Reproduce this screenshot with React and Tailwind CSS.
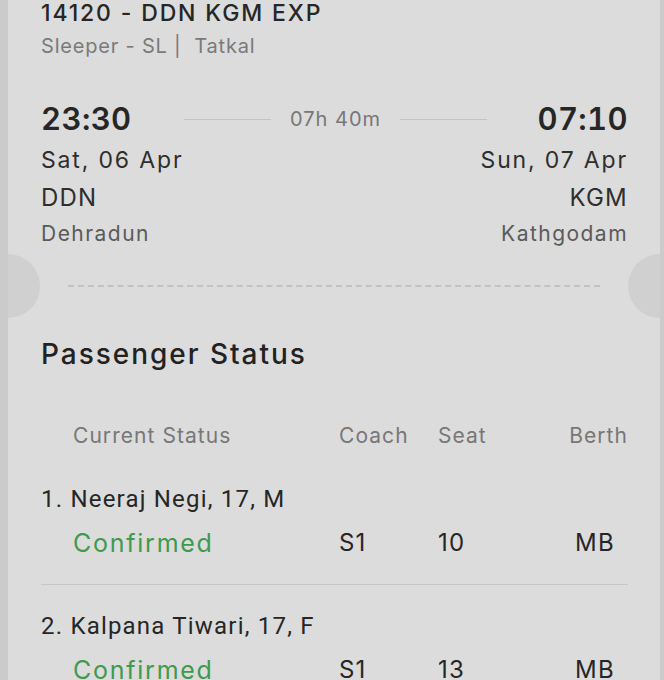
import React from "react";

const font = { fontFamily: 'Inter, "Open Sans", "Liberation Sans", sans-serif' };
const roboto = { fontFamily: 'Roboto, "Liberation Sans", sans-serif' };

function Passenger({ n, name, coach, seat, berth }) {
  return (
    <div className="flex flex-col gap-[12px]">
      <div className="h-[32px] leading-[32px] text-[24px] text-[#262626] tracking-[1.2px]" style={roboto}>
        {n}. {name}
      </div>
      <div className="grid grid-cols-[266px_99px_1fr_60px] pl-[32px] h-[32px] leading-[32px] text-[24px] tracking-[0.05em]">
        <span className="text-[#3f9a4c] text-[25px] tracking-[0.07em]">Confirmed</span>
        <span className="text-[#262626]">{coach}</span>
        <span className="text-[#262626]">{seat}</span>
        <span className="text-[#262626] text-center pr-[6px]">{berth}</span>
      </div>
    </div>
  );
}

export default function App() {
  return (
    <div className="w-[664px] h-[680px] overflow-hidden bg-[#cbcbcb] flex pl-[8px] pr-[4px]" style={font}>
      <div className="relative flex-1 bg-[#dcdcdc] overflow-hidden">
        <div className="absolute left-[-32px] top-[254px] w-[64px] h-[64px] rounded-full bg-[#d0d0d0]" />
        <div className="absolute right-[-32px] top-[254px] w-[64px] h-[64px] rounded-full bg-[#d0d0d0]" />
        <div className="flex flex-col pl-[33px] pr-[32px]">
          <div className="mt-[-2px] h-[30px] leading-[30px] text-[23px] font-medium text-[#262626] tracking-[0.08em]">
            14120 - DDN KGM EXP
          </div>
          <div className="mt-[3px] h-[30px] leading-[30px] text-[20px] text-[#7a7a7a] tracking-[0.04em]">
            Sleeper - SL | &nbsp;Tatkal
          </div>

          <div className="mt-[38px] flex items-center h-[40px]">
            <span className="text-[31px] font-semibold text-[#262626] leading-[40px] tracking-[0.4px] tabular-nums">23:30</span>
            <div className="flex-1 flex items-center pl-[52px] pr-[50px]">
              <div className="flex-1 h-px bg-[#c4c4c4]" />
              <span className="px-[19px] text-[20px] text-[#777] tracking-[0.05em]">07h 40m</span>
              <div className="flex-1 h-px bg-[#c4c4c4]" />
            </div>
            <span className="text-[31px] font-semibold text-[#262626] leading-[40px] tracking-[0.4px] tabular-nums">07:10</span>
          </div>
          <div className="mt-[5px] flex justify-between h-[32px] leading-[32px] text-[23px] text-[#2e2e2e] tracking-[0.08em]">
            <span>Sat, 06 Apr</span>
            <span>Sun, 07 Apr</span>
          </div>
          <div className="mt-[6px] flex justify-between h-[32px] leading-[32px] text-[24px] text-[#2e2e2e] tracking-[0.05em]">
            <span>DDN</span>
            <span>KGM</span>
          </div>
          <div className="mt-[5px] flex justify-between h-[30px] leading-[30px] text-[21px] text-[#5a5a5a] tracking-[0.07em]">
            <span>Dehradun</span>
            <span>Kathgodam</span>
          </div>

          <div className="mt-[36px] ml-[27px] mr-[28px] border-t-[2px] border-dashed border-[#c2c2c2]" />

          <div className="mt-[49px] h-[36px] leading-[36px] text-[28px] font-medium text-[#222] tracking-[0.07em]">
            Passenger Status
          </div>
          <div className="mt-[50px] grid grid-cols-[266px_99px_1fr_60px] pl-[32px] h-[28px] leading-[28px] text-[21px] text-[#777] tracking-[0.05em]">
            <span>Current Status</span>
            <span>Coach</span>
            <span>Seat</span>
            <span className="text-right">Berth</span>
          </div>
          <div className="mt-[33px]">
            <Passenger n={1} name="Neeraj Negi, 17, M" coach="S1" seat="10" berth="MB" />
          </div>
          <div className="mt-[25px] h-px bg-[#c6c6c6]" />
          <div className="mt-[25px]">
            <Passenger n={2} name="Kalpana Tiwari, 17, F" coach="S1" seat="13" berth="MB" />
          </div>
        </div>
      </div>
    </div>
  );
}
